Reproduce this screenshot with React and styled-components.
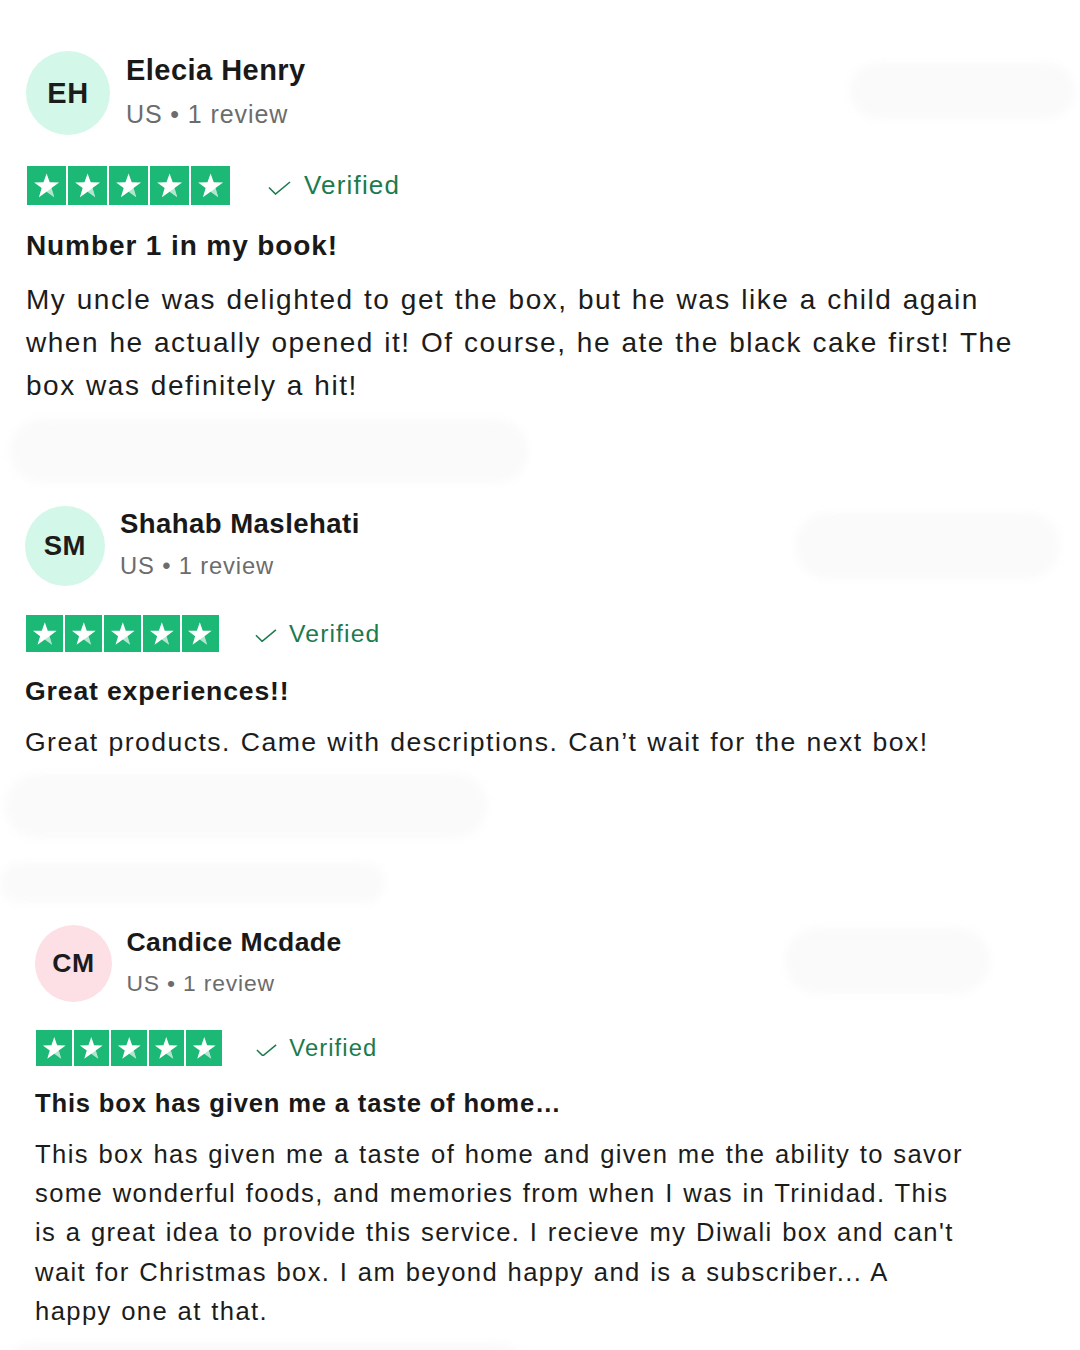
import React from "react";
import styled, { createGlobalStyle } from "styled-components";

const Global = createGlobalStyle`
  html, body { margin: 0; padding: 0; background: #ffffff; }
  body { font-family: "Liberation Sans", Arial, Helvetica, sans-serif; color: #191919; }
  * { box-sizing: border-box; }
`;

const Page = styled.main`
  width: 1080px;
  min-height: 1350px;
  padding-top: 49px;
  display: flex;
  flex-direction: column;
  overflow: hidden;
`;

const Card = styled.article`
  --s: ${(p) => p.$s};
  padding-left: ${(p) => p.$left}px;
  display: flex;
  flex-direction: column;
`;

const Header = styled.header`
  display: flex;
  align-items: center;
  gap: calc(16px * var(--s));
`;

const Avatar = styled.div`
  width: calc(84px * var(--s));
  height: calc(84px * var(--s));
  border-radius: 50%;
  flex: none;
  background: ${(p) => p.$bg};
  display: flex;
  align-items: center;
  justify-content: center;
  font-weight: 700;
  font-size: calc(29px * var(--s));
  letter-spacing: 0.02em;
  color: #1c1c1c;
`;

const Meta = styled.div`
  display: flex;
  flex-direction: column;
`;

const Name = styled.div`
  font-weight: 700;
  font-size: calc(29px * var(--s));
  line-height: calc(42px * var(--s));
  letter-spacing: 0.016em;
  color: #191919;
`;

const Sub = styled.div`
  font-size: calc(25px * var(--s));
  line-height: calc(46px * var(--s));
  letter-spacing: 0.036em;
  color: #6c6c6c;
`;

const Ghost = styled.div`
  flex: none;
  width: ${(p) => p.$w}px;
  height: ${(p) => p.$h}px;
  margin-left: ${(p) => (p.$auto ? "auto" : `${p.$ml || 0}px`)};
  margin-right: ${(p) => p.$mr || 0}px;
  margin-top: ${(p) => p.$mt || 0}px;
  border-radius: ${(p) => p.$h / 2}px;
  background: #fafafa;
  filter: blur(4px);
`;

const RatingRow = styled.div`
  display: flex;
  align-items: center;
  margin-top: calc(29px * var(--s));
  margin-left: 1px;
`;

const Stars = styled.div`
  display: flex;
  gap: calc(2px * var(--s));
`;

const StarBox = styled.span`
  width: calc(39px * var(--s));
  height: calc(39px * var(--s));
  background: #1cb875;
  display: flex;
  align-items: center;
  justify-content: center;
  svg { width: 80%; height: 80%; display: block; }
`;

const Verified = styled.span`
  display: flex;
  align-items: center;
  margin-left: calc(38px * var(--s));
  gap: calc(13px * var(--s));
  font-size: calc(26px * var(--s));
  letter-spacing: 0.045em;
  color: #1b7b4d;
  svg { width: calc(23px * var(--s)); height: calc(14px * var(--s)); margin-top: calc(4px * var(--s)); }
`;

const Title = styled.h2`
  margin: calc(21px * var(--s)) 0 0;
  font-size: calc(28px * var(--s));
  line-height: calc(40px * var(--s));
  font-weight: 700;
  letter-spacing: 0.032em;
  color: #191919;
`;

const Body = styled.p`
  margin: calc(${(p) => p.$gap}px * var(--s)) 0 0;
  max-width: ${(p) => p.$maxW}px;
  font-size: calc(28px * var(--s));
  line-height: calc(43px * var(--s));
  letter-spacing: 0.054em;
  word-spacing: 0.04em;
  color: #1c1c1c;
`;

const Footer = styled.div`
  display: flex;
  flex-direction: column;
  padding-top: 12px;
  padding-bottom: ${(p) => p.$pb}px;
  margin-left: ${(p) => -p.$pull}px;
`;

const Star = () => (
  <svg viewBox="0 0 24 24" aria-hidden="true">
    <polygon
      fill="#ffffff"
      points="12,2.6 14.4,9.5 21.6,9.6 15.8,13.9 17.9,20.9 12,16.7 6.1,20.9 8.2,13.9 2.4,9.6 9.6,9.5"
    />
    <polygon fill="#1cb875" opacity="0.35" points="12,16.7 15.2,14.4 15.8,13.9 17.9,20.9" />
  </svg>
);

const Check = () => (
  <svg viewBox="0 0 23 14" aria-hidden="true">
    <polyline points="1,6.5 7.5,13 22,1" fill="none" stroke="#1b7b4d" strokeWidth="1.6" />
  </svg>
);

const reviews = [
  {
    s: 1,
    left: 26,
    initials: "EH",
    bg: "#d3f7e8",
    name: "Elecia Henry",
    title: "Number 1 in my book!",
    text: "My uncle was delighted to get the box, but he was like a child again when he actually opened it! Of course, he ate the black cake first! The box was definitely a hit!",
    maxW: 995,
    gap: 12,
    ghost: { w: 225, h: 56, mr: 5, mt: -4 },
    footer: { pull: 16, pb: 21, pills: [{ w: 518, h: 64 }] },
  },
  {
    s: 0.95,
    left: 25,
    initials: "SM",
    bg: "#d3f7e8",
    name: "Shahab Maslehati",
    title: "Great experiences!!",
    text: "Great products. Came with descriptions. Can\u2019t wait for the next box!",
    maxW: 1000,
    gap: 12,
    ghost: { w: 265, h: 66, mr: 20, mt: 0 },
    footer: { pull: 20, pb: 20, pills: [{ w: 482, h: 64 }, { w: 385, h: 40, mt: 25, ml: -5 }] },
  },
  {
    s: 0.915,
    left: 35,
    initials: "CM",
    bg: "#fde0e6",
    name: "Candice Mcdade",
    title: "This box has given me a taste of home\u2026",
    text: "This box has given me a taste of home and given me the ability to savor some wonderful foods, and memories from when I was in Trinidad. This is a great idea to provide this service. I recieve my Diwali box and can't wait for Christmas box. I am beyond happy and is a subscriber... A happy one at that.",
    maxW: 928,
    gap: 14,
    ghost: { w: 205, h: 66, mr: 90, mt: -6 },
    footer: { pull: 25, pb: 0, pills: [{ w: 510, h: 40 }] },
  },
];

export default function App() {
  return (
    <>
      <Global />
      <Page>
        {reviews.map((r) => (
          <Card key={r.name} $s={r.s} $left={r.left}>
            <Header>
              <Avatar $bg={r.bg}>{r.initials}</Avatar>
              <Meta>
                <Name>{r.name}</Name>
                <Sub>US &bull; 1 review</Sub>
              </Meta>
              <Ghost $auto $w={r.ghost.w} $h={r.ghost.h} $mr={r.ghost.mr} $mt={r.ghost.mt} />
            </Header>
            <RatingRow>
              <Stars>
                {[0, 1, 2, 3, 4].map((i) => (
                  <StarBox key={i}>
                    <Star />
                  </StarBox>
                ))}
              </Stars>
              <Verified>
                <Check />
                Verified
              </Verified>
            </RatingRow>
            <Title>{r.title}</Title>
            <Body $maxW={r.maxW} $gap={r.gap}>{r.text}</Body>
            <Footer $pull={r.footer.pull} $pb={r.footer.pb}>
              {r.footer.pills.map((p, i) => (
                <Ghost key={i} $w={p.w} $h={p.h} $mt={p.mt} $ml={p.ml} />
              ))}
            </Footer>
          </Card>
        ))}
      </Page>
    </>
  );
}
